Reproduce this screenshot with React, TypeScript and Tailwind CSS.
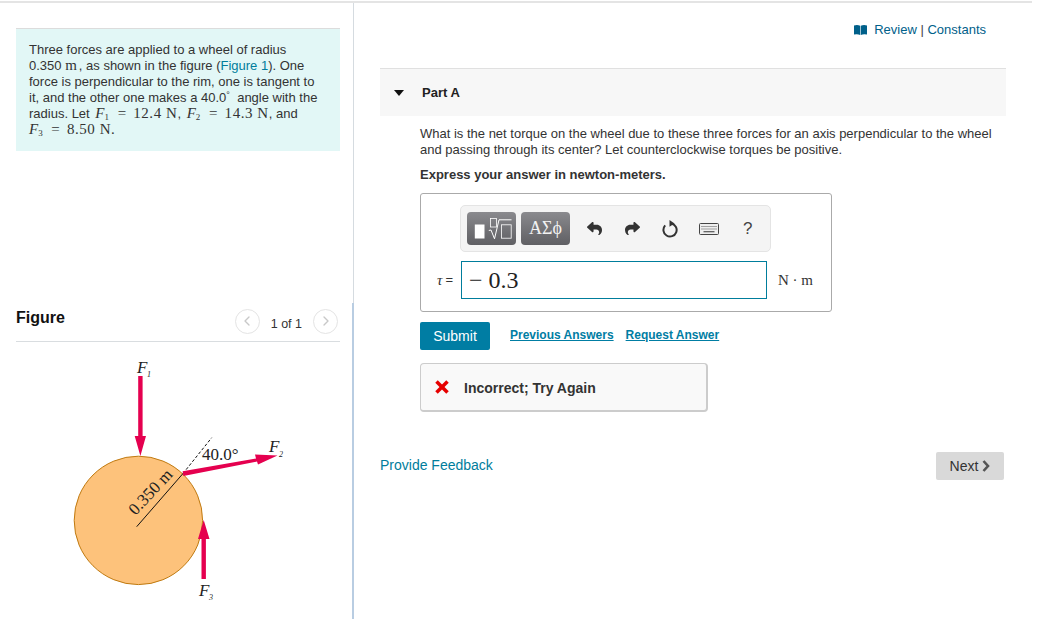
import type { FC } from 'react';
import { FaReply, FaShare } from 'react-icons/fa6';
import { ChevronLeft, ChevronRight } from 'lucide-react';

const Force: FC<{ n: number; gap?: boolean }> = ({ n, gap }) => (
    <span className={gap ? "ml-[2px] pr-[2px] font-['Liberation_Serif',serif] text-[15px] italic leading-none" : "pr-[2px] font-['Liberation_Serif',serif] text-[15px] italic leading-none"}>
        F<span className="relative top-[2px] text-[9px] not-italic leading-none">{n}</span>
    </span>
);

const Num: FC<{ children: string }> = ({ children }) => (
    <span className="font-['Liberation_Serif',serif] text-[15px] leading-none tracking-[0.55px]">{children}</span>
);

const Arrow: FC<{ points: string }> = ({ points }) => <polygon points={points} fill="#e5004f" />;

const WheelFigure: FC = () => {
    return <svg viewBox="16 342 324 277" className="block h-[277px] w-[324px]">
        <circle cx="138.4" cy="520.4" r="64.2" fill="#fdc27b" stroke="#c07a10" strokeWidth="1" />

        {/* radius and dashed reference line */}
        <line x1="136.7" y1="526.7" x2="183" y2="473.5" stroke="#111" strokeWidth="1" />
        <line x1="183" y1="473.5" x2="211.7" y2="437.7" stroke="#111" strokeWidth="1" strokeDasharray="3 2" />

        <Arrow points="138.2,376 142.6,376 142.6,436 146,436 140.4,456 134.7,436 138.2,436" />
        <Arrow points="182.6,471.3 256,458.6 255,454.6 277.5,455.5 258,464.5 257,461.6 183.4,476" />
        <Arrow points="201.5,579 205.9,579 205.9,539 209.5,539 203.7,520 198,539 201.5,539" />

        <g fontFamily="'Liberation Serif', serif" fill="#222">
            <text x="137" y="373" fontSize="17" fontStyle="italic">F</text>
            <text x="147" y="377" fontSize="8" fontStyle="italic">1</text>
            <text x="269" y="452" fontSize="17" fontStyle="italic">F</text>
            <text x="279" y="457" fontSize="8" fontStyle="italic">2</text>
            <text x="199" y="596" fontSize="17" fontStyle="italic">F</text>
            <text x="209" y="600" fontSize="8" fontStyle="italic">3</text>
            <text x="202" y="460" fontSize="17">40.0°</text>
            <text x="0" y="0" fontSize="17" transform="translate(135.5 516) rotate(-47)">0.350 m</text>
        </g>
    </svg>;
}

const BookIcon: FC = () => (
    <svg viewBox="0 0 13 10" className="h-[10px] w-[13px]" fill="#00608a">
        <path d="M0 0.5 Q3.5 -0.5 6.2 0.8 V10 Q3.5 8.8 0 9.6 Z" />
        <path d="M13 0.5 Q9.5 -0.5 6.8 0.8 V10 Q9.5 8.8 13 9.6 Z" />
    </svg>
);

const KeyboardIcon: FC = () => (
    <svg viewBox="0 0 20 12" className="h-[12px] w-[20px]">
        <rect x="0.5" y="0.5" width="19" height="11" rx="1" fill="#eee" stroke="#444" />
        <line x1="2.5" y1="3.5" x2="17.5" y2="3.5" stroke="#555" strokeWidth="1.2" strokeDasharray="1 1" />
        <line x1="2.5" y1="6" x2="17.5" y2="6" stroke="#555" strokeWidth="1.2" strokeDasharray="1 1" />
        <line x1="4.5" y1="8.7" x2="15.5" y2="8.7" stroke="#555" strokeWidth="1.2" />
    </svg>
);

const TemplateIcon: FC = () => (
    <svg viewBox="0 0 40 24" className="h-[24px] w-[40px]" fill="none" stroke="#fff">
        <rect x="2.8" y="7.5" width="9.7" height="14" fill="#fff" stroke="none" />
        <rect x="18.5" y="1.5" width="6" height="8.5" strokeWidth="0.8" />
        <path d="M16.8 13.5 L19 13 L22.5 21.8 L27 2.8 L39.5 2.8" strokeWidth="1" />
        <rect x="29.5" y="7.8" width="9.7" height="13.4" strokeWidth="0.8" />
    </svg>
);

const ResetIcon: FC = () => (
    <svg viewBox="0 0 18 18" className="h-[18px] w-[18px]" fill="none">
        <path d="M10.2 3.4 A6.6 6.6 0 1 1 4.2 5.4" stroke="#333" strokeWidth="2" />
        <polygon points="8.5,0 13.5,3.4 8.5,6.8" fill="#333" />
    </svg>
);

const App: FC = () => {
    return <div className="font-['Liberation_Sans',Arial,sans-serif] text-[13px] text-[#333] h-[619px] w-[1052px] overflow-hidden bg-white">
        <div className="flex h-[619px] w-[1032px] border-t-2 mt-px border-[#e4e4e4]">

            {/* left column, problem text and figure */}
            <div className="flex w-[354px] shrink-0 flex-col">
                <div className="h-[300px] border-r border-[#d5dbe0] pl-4 pr-[13px] pt-[25px]">
                    <div className="h-[123px] border-t border-[#dcdcdc] bg-[#e2f7f6] pl-[13px] pr-[20px] pt-[13px] leading-[16px]">
                        Three forces are applied to a wheel of radius 0.350 <span className="font-['Liberation_Serif',serif] text-[15px] leading-none tracking-[2px]">m</span>, as shown in the figure (<span className="text-[#007d9c]">Figure 1</span>). One force is perpendicular to the rim, one is tangent to it, and the other one makes a 40.0<span className="relative -top-[4px] text-[9px] leading-none">°</span> &nbsp;angle with the radius. Let <Force n={1} gap /> <span className="mx-[3px]"><Num>=</Num></span> <Num>12.4 N</Num>, <Force n={2} gap /> <span className="mx-[3px]"><Num>=</Num></span> <Num>14.3 N</Num>, and<br /><Force n={3} /> <span className="mx-[3px]"><Num>=</Num></span> <Num>8.50 N.</Num>
                    </div>
                </div>
                <div className="min-h-0 flex-1 border-r-2 border-[#b9cde2] pl-4 pr-[12px]">
                    <div className="flex h-[39px] items-center justify-between border-b border-[#d9dde0] pr-[2px]">
                        <h2 className="mb-[8px] text-[16px] font-bold leading-none text-[#111]">Figure</h2>
                        <div className="mb-[2px] flex items-center gap-[11px] text-[12.5px]">
                            <span className="flex h-[25px] w-[25px] items-center justify-center rounded-full border border-[#e4e4e4] text-[#c8c8c8]"><ChevronLeft size={16} /></span>
                            <span className="pt-[7px]">1 of 1</span>
                            <span className="flex h-[25px] w-[25px] items-center justify-center rounded-full border border-[#e4e4e4] text-[#c8c8c8]"><ChevronRight size={16} /></span>
                        </div>
                    </div>
                    <WheelFigure />
                </div>
            </div>

            {/* right column, the question */}
            <div className="min-w-0 flex-1 pl-[26px] pr-[26px]">
                <div className="flex h-[65px] items-start justify-end gap-[7px] pr-[20px] pt-[19px] text-[#00608a]">
                    <span className="pt-[3px]"><BookIcon /></span>
                    <span className="leading-[16px]">Review <span className="text-[#444]">|</span> Constants</span>
                </div>

                <div className="flex h-[48px] items-center border-t border-[#e0e0e0] bg-[#f7f7f7] pl-[14px]">
                    <span className="h-0 w-0 border-x-[5px] border-t-[6px] border-x-transparent border-t-[#111]" />
                    <span className="ml-[18px] font-bold text-[#222]">Part A</span>
                </div>

                <div className="pl-[40px]">
                    <p className="mt-[10px] leading-[16px]">What is the net torque on the wheel due to these three forces for an axis perpendicular to the wheel<br />and passing through its center? Let counterclockwise torques be positive.</p>
                    <p className="mt-[9px] font-bold leading-[16px]">Express your answer in newton-meters.</p>

                    <div className="relative mt-[10px] h-[119px] w-[412px] rounded-[3px] border border-[#aaa] pl-[39px] pt-[11px]">
                        <div className="flex h-[47px] w-[311px] items-center rounded-[5px] border border-[#e4e4e4] bg-[#f4f4f4] pl-[6px]">
                            <span className="flex h-[33px] w-[49px] items-center justify-center rounded-[4px] bg-gradient-to-b from-[#8a8a8e] to-[#5f5f63]"><TemplateIcon /></span>
                            <span className="ml-[5px] flex h-[33px] w-[49px] items-center justify-center rounded-[4px] bg-gradient-to-b from-[#8a8a8e] to-[#5f5f63] font-['Liberation_Serif',serif] text-[18px] text-[#f2f2f2]">ΑΣϕ</span>
                            <FaReply size={15} className="ml-[17px] text-[#333]" />
                            <FaShare size={15} className="ml-[23px] text-[#333]" />
                            <span className="ml-[21px]"><ResetIcon /></span>
                            <span className="ml-[20px]"><KeyboardIcon /></span>
                            <span className="ml-[24px] text-[17px] text-[#444]">?</span>
                        </div>

                        <div className="absolute left-0 top-[67px] flex items-center">
                            <span className="flex w-[40px] items-center justify-end gap-[3px] pr-[8px] text-[13px]"><i className="font-['Liberation_Serif',serif] text-[15px]">τ</i> =</span>
                            <div className="flex h-[38px] w-[306px] items-center border border-[#007d9c] pl-[7px] font-['Liberation_Serif',serif] text-[24px] text-[#222]">− 0.3</div>
                            <span className="ml-[11px] font-['Liberation_Serif',serif] text-[15px]">N · m</span>
                        </div>
                    </div>

                    <div className="mt-[10px] flex items-center">
                        <button className="h-[28px] w-[70px] rounded-[2px] bg-[#007da3] text-[14px] text-white">Submit</button>
                        <a className="mb-[2px] ml-[20px] text-[12px] font-bold text-[#007da3] underline">Previous Answers</a>
                        <a className="mb-[2px] ml-[12px] text-[12px] font-bold text-[#007da3] underline">Request Answer</a>
                    </div>

                    <div className="mt-[13px] flex h-[49px] w-[288px] items-center rounded-[4px] border border-[#ccc] border-b-2 border-r-2 bg-[#f9f9f9] pl-[14px]">
                        <svg viewBox="0 0 14 14" className="h-[14px] w-[14px]" stroke="#e60000" strokeWidth="3.6">
                            <line x1="1.5" y1="1.5" x2="12.5" y2="12.5" />
                            <line x1="12.5" y1="1.5" x2="1.5" y2="12.5" />
                        </svg>
                        <span className="ml-[15px] pt-[2px] text-[14px] font-bold text-[#333]">Incorrect; Try Again</span>
                    </div>
                </div>

                <div className="mt-[40px] flex items-center justify-between pr-[2px]">
                    <a className="mb-[2px] text-[14px] text-[#007d9c]">Provide Feedback</a>
                    <button className="flex h-[28px] w-[68px] items-center justify-center gap-[4px] rounded-[2px] bg-[#d9d9d9] text-[14px] text-[#333]">
                        Next
                        <svg viewBox="0 0 8 12" className="h-[12px] w-[8px]" fill="none" stroke="#555" strokeWidth="2.6"><polyline points="1.5,1 6,6 1.5,11" /></svg>
                    </button>
                </div>
            </div>
        </div>
    </div>;
}

export default App;
